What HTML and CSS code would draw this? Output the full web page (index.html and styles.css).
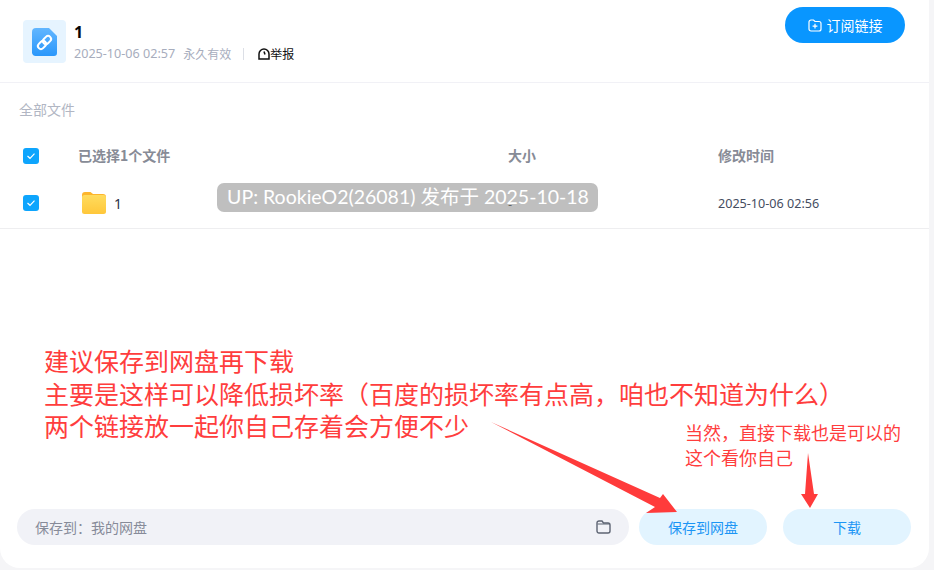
FILE: index.html
```html
<!DOCTYPE html>
<html lang="zh-CN">
<head>
<meta charset="utf-8">
<title>分享文件</title>
<link rel="stylesheet" href="styles.css">
</head>
<body>
<main class="card">
  <header class="head">
    <div class="file-icon">
      <svg width="25" height="28" viewBox="0 0 25 28"><defs><linearGradient id="g" x1="0" y1="0" x2="0" y2="1"><stop offset="0" stop-color="#62b6ff"/><stop offset="1" stop-color="#2a97fb"/></linearGradient></defs><path d="M4 0h13l8 8v17a3 3 0 0 1-3 3H4a4 4 0 0 1-4-3V4a4 4 0 0 1 4-4z" fill="url(#g)"/><g transform="rotate(-45 12.500 14.500)" fill="none" stroke="#fff" stroke-width="2"><rect x="4.500" y="11.500" width="9" height="6" rx="3"/><rect x="11.500" y="11.500" width="9" height="6" rx="3"/></g></svg>
    </div>
    <div class="head-info">
      <div class="title">1</div>
      <div class="meta">
        <span class="date">2025-10-06 02:57</span>
        <span class="expire">永久有效</span>
        <span class="sep"></span>
        <span class="report">
          <svg width="12" height="12" viewBox="0 0 12 12"><path d="M1 11V6a5 5 0 0 1 10 0v5z" fill="none" stroke="#111" stroke-width="1.500"/><path d="M6 3.500l1 3" stroke="#111" stroke-width="1.500"/></svg>举报
        </span>
      </div>
    </div>
    <button class="subscribe">
      <svg width="14" height="13" viewBox="0 0 14 13"><path d="M1 3a2 2 0 0 1 2-2h2.500l1.500 1.500h4a2 2 0 0 1 2 2V10a2 2 0 0 1-2 2H3a2 2 0 0 1-2-2z" fill="none" stroke="#fff" stroke-width="1.200"/><path d="M7 4.800v4.800M4.600 7.200h4.800" stroke="#fff" stroke-width="1.200"/></svg>
      订阅链接
    </button>
  </header>

  <div class="crumb">全部文件</div>

  <div class="row row-head">
    <span class="check"><svg width="10" height="8" viewBox="0 0 10 8"><path d="M1.500 4l2.500 2.300 4.500-4.600" fill="none" stroke="#fff" stroke-width="1.200"/></svg></span>
    <span class="col-name">已选择1个文件</span>
    <span class="col-size">大小</span>
    <span class="col-time">修改时间</span>
  </div>
  <div class="row row-file">
    <span class="check"><svg width="10" height="8" viewBox="0 0 10 8"><path d="M1.500 4l2.500 2.300 4.500-4.600" fill="none" stroke="#fff" stroke-width="1.200"/></svg></span>
    <span class="col-name file-name">
      <svg width="24" height="22" viewBox="0 0 24 22"><defs><linearGradient id="f" x1="0" y1="0" x2="0" y2="1"><stop offset="0" stop-color="#ffdc5e"/><stop offset="1" stop-color="#ffc73a"/></linearGradient></defs><path d="M0 3a3 3 0 0 1 3-3h5.500l2.500 2h10a3 3 0 0 1 3 3v3H0z" fill="#fdb52c"/><rect y="3" width="24" height="19" rx="2.500" fill="url(#f)"/></svg>
      <span>1</span>
    </span>
    <span class="col-size dash">-</span>
    <span class="col-time time-val">2025-10-06 02:56</span>
  </div>

  <footer class="foot">
    <div class="path">
      <span>保存到&#xFF1A;我的网盘</span>
      <svg width="15" height="14" viewBox="0 0 15 14"><path d="M1 3a2 2 0 0 1 2-2h3l1.500 2H12a2 2 0 0 1 2 2v6a2 2 0 0 1-2 2H3a2 2 0 0 1-2-2z" fill="none" stroke="#5d6473" stroke-width="1.400"/><path d="M1.500 4h12" stroke="#5d6473" stroke-width="1"/></svg>
    </div>
    <button class="action">保存到网盘</button>
    <button class="action">下载</button>
  </footer>
</main>

<div class="watermark">UP: RookieO2(26081) 发布于 2025-10-18</div>
<div class="note note-big">建议保存到网盘再下载<br>主要是这样可以降低损坏率&#xFF08;百度的损坏率有点高&#xFF0C;咱也不知道为什么&#xFF09;<br>两个链接放一起你自己存着会方便不少</div>
<div class="note note-small">当然&#xFF0C;直接下载也是可以的<br>这个看你自己</div>
<svg class="arrows" width="934" height="570" viewBox="0 0 934 570">
  <path d="M491 422L660 498L663 494L677 512L646 513L655 507Z" fill="#ff3b3b"/>
  <path d="M808 453L814 494L818 494L810 508L801 494L805 494Z" fill="#ff3b3b"/>
</svg>
</body>
</html>
```
FILE: styles.css
```css
* { box-sizing: border-box; }
html, body { margin: 0; height: 100%; }
body {
  position: relative;
  width: 934px;
  height: 570px;
  overflow: hidden;
  background: #f5f5f7;
  font-family: "Noto Sans CJK SC", "Liberation Sans", sans-serif;
}
button { font-family: inherit; border: 0; cursor: pointer; }

.card {
  width: 929px;
  height: 568px;
  background: #fff;
  border-radius: 0 0 20px 20px;
  display: flex;
  flex-direction: column;
}

.head {
  height: 83px;
  flex: none;
  display: flex;
  align-items: flex-start;
  padding: 0 24px 0 23px;
  border-bottom: 1px solid #f1f1f6;
}
.file-icon {
  width: 43px;
  height: 43px;
  margin-top: 20px;
  flex: none;
  background: #e6f4ff;
  border-radius: 4px;
  display: flex;
  align-items: center;
  justify-content: center;
}
.head-info { margin: 21px 0 0 8px; flex: 1; }
.title {
  height: 23px;
  font: 700 16px/23px "Noto Sans", "Liberation Sans", sans-serif;
  color: #05060a;
}
.meta {
  display: flex;
  align-items: center;
  height: 20px;
  font-size: 12px;
  line-height: 20px;
  color: #a7adbd;
}
.date { font-family: "Noto Sans", "Noto Sans CJK SC", sans-serif; font-size: 12.6px; }
.expire { margin-left: 8px; }
.sep { width: 1px; height: 12px; background: #dcdfe6; margin: 0 14px 0 12px; }
.report { display: flex; align-items: center; color: #111; }
.subscribe {
  width: 120px;
  height: 36px;
  margin-top: 7px;
  flex: none;
  border-radius: 18px;
  background: #0996ff;
  color: #fff;
  font-size: 14px;
  display: flex;
  align-items: center;
  justify-content: center;
  gap: 5px;
}

.crumb {
  margin: 16px 0 0 19px;
  height: 20px;
  font-size: 14px;
  line-height: 20px;
  color: #b1b6c3;
}

.row {
  display: flex;
  align-items: center;
  padding-left: 23px;
  flex: none;
}
.row-head { height: 47px; margin-top: 13px; }
.row-file { height: 50px; border-bottom: 1px solid #eeeef0; padding-bottom: 1px; }
.check {
  width: 16px;
  height: 16px;
  flex: none;
  background: #0ea5fd;
  border-radius: 3px;
  display: flex;
  align-items: center;
  justify-content: center;
}
.col-name { width: 429px; margin-left: 39px; flex: none; }
.col-size { width: 211px; flex: none; padding-left: 1px; }
.row-head .col-name,
.row-head .col-size,
.row-head .col-time { font-size: 14px; font-weight: 700; color: #878b96; padding-bottom: 2px; }
.file-name {
  display: flex;
  align-items: center;
  gap: 8px;
  padding-left: 4px;
  font: 14px "Noto Sans", sans-serif;
  color: #2d2f45;
}
.dash { font-size: 12px; color: #333; }
.time-val { font: 12.6px "Noto Sans", sans-serif; color: #454d5f; }

.foot {
  margin-top: auto;
  margin-bottom: 23px;
  padding-left: 17px;
  display: flex;
  gap: 10px;
}
.path {
  width: 612px;
  height: 36px;
  padding: 0 18px 0 18px;
  border-radius: 18px;
  background: #f1f2f7;
  color: #878b99;
  font-size: 14px;
  display: flex;
  align-items: center;
  justify-content: space-between;
}
.action {
  width: 128px;
  height: 36px;
  border-radius: 18px;
  background: #e2f4ff;
  color: #1b95f5;
  font-size: 14px;
}
.foot .action:last-child { margin-left: 6px; }

.watermark {
  position: absolute;
  left: 217px;
  top: 183px;
  width: 381px;
  height: 29px;
  padding-left: 1px;
  border-radius: 7px;
  background: rgba(128, 128, 128, 0.5);
  color: #fff;
  font: 19.5px/27px Lato, "Noto Sans CJK SC", sans-serif;
  text-align: center;
  white-space: nowrap;
}
.note { position: absolute; color: #ff3d3d; white-space: nowrap; font-family: "Noto Sans CJK SC", sans-serif; }
.note-big { left: 44px; top: 344px; font-size: 25px; line-height: 32.5px; }
.note-small { left: 685px; top: 420px; font-size: 18px; line-height: 25px; }
.arrows { position: absolute; left: 0; top: 0; pointer-events: none; }
```
